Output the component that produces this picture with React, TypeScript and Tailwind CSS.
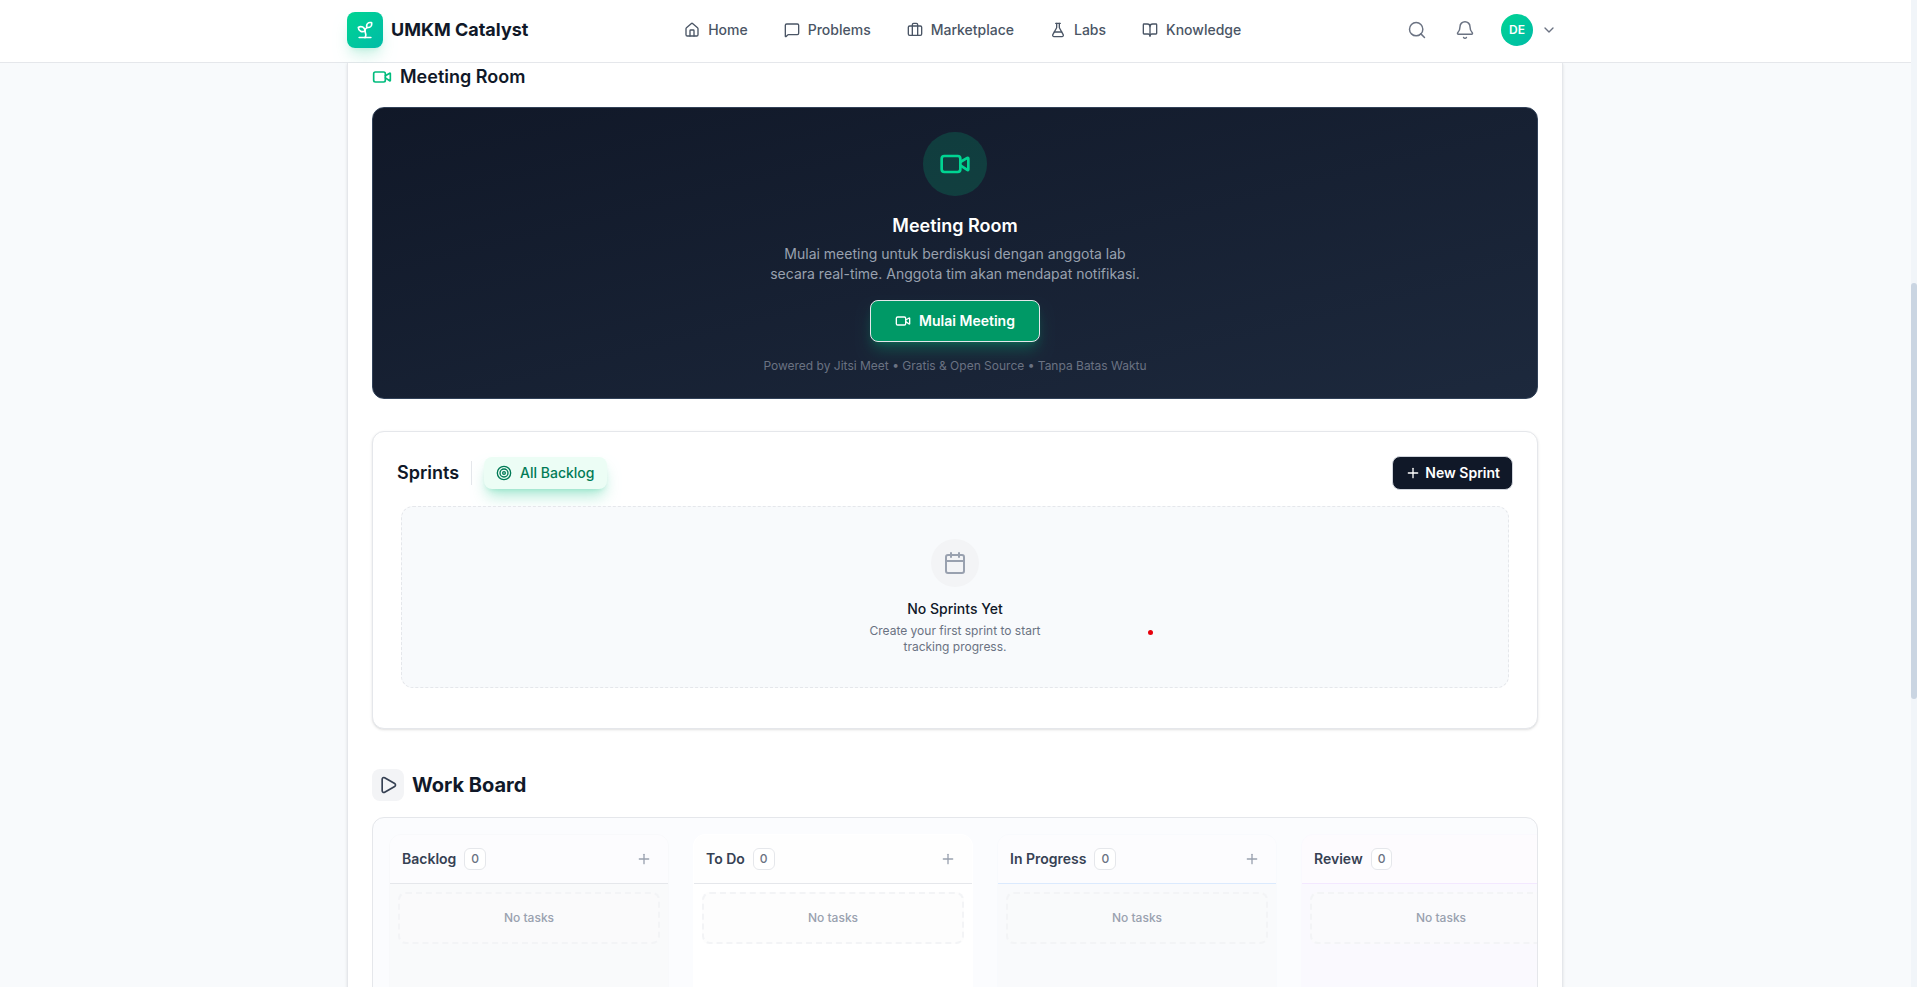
import {
  Bell,
  BookOpen,
  Briefcase,
  Calendar,
  ChevronDown,
  FlaskConical,
  House,
  MessageSquare,
  Play,
  Plus,
  Search,
  Sprout,
  Target,
  Video,
} from "lucide-react";

const navItems = [
  { label: "Home", icon: House },
  { label: "Problems", icon: MessageSquare },
  { label: "Marketplace", icon: Briefcase },
  { label: "Labs", icon: FlaskConical },
  { label: "Knowledge", icon: BookOpen },
];

const columns = [
  {
    title: "Backlog",
    body: "bg-[#f9fafb] border-[#f8f9fb]",
    head: "bg-[#fcfcfe] border-gray-200",
    empty: "bg-[#fafafb]",
  },
  {
    title: "To Do",
    body: "bg-white border-white",
    head: "bg-[#fefefe] border-gray-200",
    empty: "bg-[#fdfdfd]",
  },
  {
    title: "In Progress",
    body: "bg-[#f9fafc] border-[#f8fafd]",
    head: "bg-[#fcfcfe] border-blue-100",
    empty: "bg-[#f9fafb]",
  },
  {
    title: "Review",
    body: "bg-[#faf9fe] border-[#faf9fe]",
    head: "bg-[#fdfbfe] border-purple-100",
    empty: "bg-[#fafafc]",
  },
];

function Header() {
  return (
    <header className="shrink-0 border-b border-gray-200 bg-white pr-px pb-0.5">
      <div className="mx-auto flex h-15 max-w-7xl items-center justify-between px-8">
        <a href="#" className="flex items-center gap-2">
          <span className="flex size-9 items-center justify-center rounded-lg bg-gradient-to-br from-emerald-400 to-teal-500 text-white shadow-lg shadow-emerald-500/20">
            <Sprout size={20} />
          </span>
          <span className="text-lg font-bold text-gray-900">UMKM Catalyst</span>
        </a>

        <nav className="flex items-center gap-1">
          {navItems.map(({ label, icon: Icon }) => (
            <a
              key={label}
              href="#"
              className="flex items-center gap-2 px-4 py-2 text-sm font-medium text-gray-600"
            >
              <Icon size={16} />
              {label}
            </a>
          ))}
        </nav>

        <div className="flex items-center gap-2 text-gray-500">
          <button aria-label="Search" className="flex size-10 items-center justify-center">
            <Search size={20} strokeWidth={1.75} />
          </button>
          <button aria-label="Notifications" className="flex size-10 items-center justify-center">
            <Bell size={20} strokeWidth={1.75} />
          </button>
          <button className="flex items-center gap-2 pr-1.5 pl-2">
            <span className="flex size-8 items-center justify-center rounded-full bg-gradient-to-br from-emerald-400 to-teal-500 text-xs font-semibold text-white">
              DE
            </span>
            <ChevronDown size={16} />
          </button>
        </div>
      </div>
    </header>
  );
}

function MeetingRoom() {
  return (
    <section>
      <div className="mb-4 flex items-center gap-2">
        <Video size={20} className="text-emerald-500" />
        <h2 className="text-lg font-semibold text-gray-900">Meeting Room</h2>
      </div>

      <div className="flex flex-col items-center rounded-xl border border-slate-700 bg-gradient-to-br from-gray-900 to-slate-800 p-6 text-center">
        <div className="mb-4 flex size-16 items-center justify-center rounded-full bg-emerald-500/20">
          <Video size={32} className="text-emerald-400" />
        </div>
        <h3 className="mb-1 text-lg font-semibold text-white">Meeting Room</h3>
        <p className="mb-4 max-w-96 text-sm text-gray-400">
          Mulai meeting untuk berdiskusi dengan anggota lab secara real-time.
          Anggota tim akan mendapat notifikasi.
        </p>
        <button className="mb-4 flex items-center gap-2 rounded-lg border border-gray-200 bg-emerald-600 px-6 py-2.5 text-sm font-semibold text-white shadow-lg shadow-emerald-500/30">
          <Video size={16} />
          Mulai Meeting
        </button>
        <p className="text-xs text-gray-500">
          Powered by Jitsi Meet • Gratis &amp; Open Source • Tanpa Batas Waktu
        </p>
      </div>
    </section>
  );
}

function Sprints() {
  return (
    <section className="rounded-xl border border-gray-200 bg-white p-6 shadow-sm">
      <div className="mb-4 flex items-center justify-between">
        <div className="flex items-center gap-3">
          <h2 className="text-lg font-semibold text-gray-900">Sprints</h2>
          <span className="h-6 w-px bg-gray-200" />
          <button className="flex h-8 items-center gap-2 rounded-lg bg-emerald-50 px-3 text-sm font-medium text-emerald-700 shadow-lg shadow-emerald-500/30">
            <Target size={16} />
            All Backlog
          </button>
        </div>
        <button className="flex items-center gap-1 rounded-lg border border-gray-300 bg-gray-900 px-3 py-1.5 text-sm font-semibold text-white">
          <Plus size={16} />
          New Sprint
        </button>
      </div>

      <div className="relative mx-1 mb-4 flex flex-col items-center rounded-xl border border-dashed border-gray-200 bg-slate-50 py-8 text-center">
        <div className="mb-3 flex size-12 items-center justify-center rounded-full bg-gray-100 text-gray-400">
          <Calendar size={24} />
        </div>
        <h3 className="mb-1 text-sm font-medium text-gray-900">No Sprints Yet</h3>
        <p className="max-w-50 text-xs text-gray-500">
          Create your first sprint to start tracking progress.
        </p>
        <span className="absolute top-[123px] left-[746px] size-[5px] rounded-full bg-red-600" />
      </div>
    </section>
  );
}

function WorkBoard() {
  return (
    <section>
      <div className="mb-4 flex items-center gap-2">
        <span className="flex size-8 items-center justify-center rounded-lg bg-gray-100 text-gray-700">
          <Play size={20} />
        </span>
        <h2 className="text-xl font-bold text-gray-900">Work Board</h2>
      </div>

      <div className="flex gap-6 overflow-hidden rounded-xl border border-gray-200 bg-[#fbfcfe] p-4">
        {columns.map((column) => (
          <div
            key={column.title}
            className={`min-h-96 w-70 shrink-0 overflow-hidden rounded-xl border ${column.body}`}
          >
            <div className={`flex items-center justify-between border-b p-3 ${column.head}`}>
              <div className="flex items-center gap-2">
                <h3 className="text-sm font-semibold text-gray-700">{column.title}</h3>
                <span className="rounded-md border border-gray-200 bg-white px-1.5 py-0.5 text-xs font-medium text-gray-500">
                  0
                </span>
              </div>
              <button aria-label={`Add task to ${column.title}`} className="p-1 text-gray-400">
                <Plus size={16} />
              </button>
            </div>
            <div className="p-2">
              <p
                className={`rounded-lg border-2 border-dashed border-gray-100 py-4 text-center text-xs font-medium text-gray-400 ${column.empty}`}
              >
                No tasks
              </p>
            </div>
          </div>
        ))}
      </div>
    </section>
  );
}

export default function App() {
  return (
    <div className="flex h-screen overflow-hidden bg-slate-50 font-['Inter',sans-serif]">
      <div className="flex min-w-0 flex-1 flex-col">
        <Header />
        <div className="min-h-0 flex-1 overflow-hidden pr-px">
          <main className="mx-auto w-full max-w-7xl px-8">
            <div className="space-y-8 border-x border-gray-200 bg-white px-6 shadow-sm">
              <MeetingRoom />
              <Sprints />
              <div className="pt-2">
                <WorkBoard />
              </div>
            </div>
          </main>
        </div>
      </div>
      <div className="w-1.5 shrink-0 bg-slate-100 pt-[283px]">
        <div className="h-[416px] rounded-full bg-slate-300" />
      </div>
    </div>
  );
}
